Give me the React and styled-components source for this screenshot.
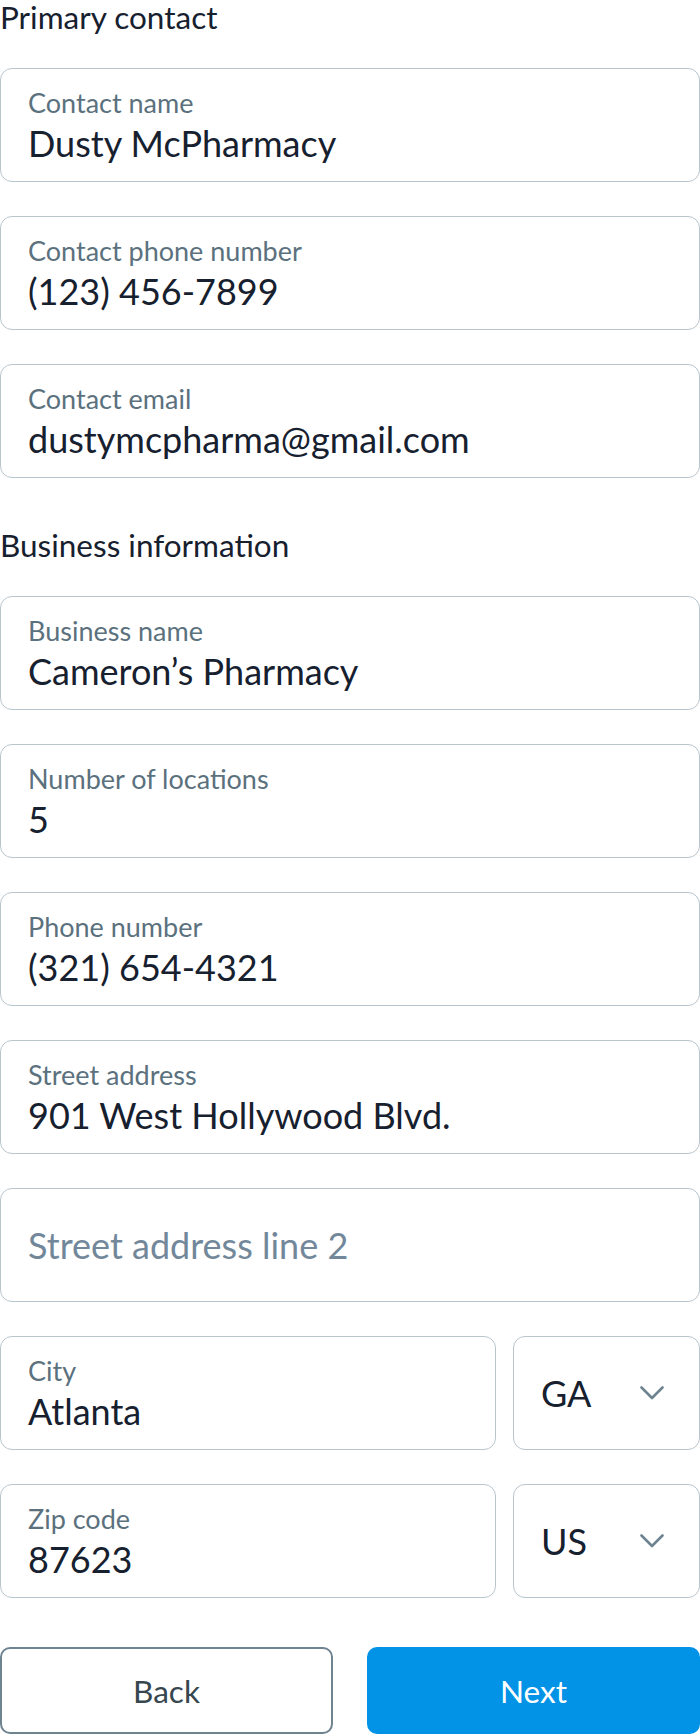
import React from 'react';
import styled, { createGlobalStyle } from 'styled-components';

const GlobalStyle = createGlobalStyle`
  body {
    margin: 0;
    background: #fff;
    font-family: Lato, "Open Sans", sans-serif;
  }
  * { box-sizing: border-box; }
`;

const Page = styled.div`
  width: 700px;
  display: flex;
  flex-direction: column;
`;

const Section = styled.section`
  display: flex;
  flex-direction: column;
  gap: 34px;
  & + & {
    margin-top: 50px;
  }
`;

const Heading = styled.h2`
  margin: 0;
  font-size: 31.5px;
  line-height: 34px;
  font-weight: 400;
  color: #16202e;
`;

const Row = styled.div`
  display: grid;
  grid-template-columns: 1fr 187px;
  gap: 17px;
`;

const Field = styled.div`
  height: 114px;
  border: 1.5px solid #b9c5cd;
  border-radius: 12px;
  padding: 0 27px;
  display: flex;
  flex-direction: column;
  justify-content: center;
  background: #fff;
`;

const Label = styled.span`
  font-size: 27px;
  line-height: 36px;
  color: #5b717e;
`;

const Value = styled.span`
  font-size: 36px;
  line-height: 44px;
  white-space: nowrap;
  color: ${(p) => (p.$placeholder ? '#72889a' : '#16202e')};
`;

const Select = styled(Field)`
  flex-direction: row;
  align-items: center;
  justify-content: space-between;
  padding: 0 35px 0 27px;
`;

const Chevron = () => (
  <svg width="24" height="14" viewBox="0 0 24 14" fill="none">
    <path d="M1.5 1.5 L12 12 L22.5 1.5" stroke="#6e8390" strokeWidth="2.6" strokeLinecap="round" strokeLinejoin="round" />
  </svg>
);

const Actions = styled.div`
  display: grid;
  grid-template-columns: 1fr 1fr;
  gap: 34px;
  margin-top: 49px;
`;

const Button = styled.button`
  height: 87px;
  border-radius: 10px;
  font-family: inherit;
  font-size: 31.5px;
  cursor: pointer;
  border: 2px solid ${(p) => (p.$primary ? '#0293e7' : '#6f8391')};
  background: ${(p) => (p.$primary ? '#0293e7' : '#fff')};
  color: ${(p) => (p.$primary ? '#fff' : '#37474f')};
`;

const TextField = ({ label, value, placeholder }) => (
  <Field>
    {label && <Label>{label}</Label>}
    {value ? <Value>{value}</Value> : <Value $placeholder>{placeholder}</Value>}
  </Field>
);

const SelectField = ({ value }) => (
  <Select>
    <Value>{value}</Value>
    <Chevron />
  </Select>
);

export default function App() {
  return (
    <Page>
      <GlobalStyle />
      <Section>
        <Heading>Primary contact</Heading>
        <TextField label="Contact name" value="Dusty McPharmacy" />
        <TextField label="Contact phone number" value="(123) 456-7899" />
        <TextField label="Contact email" value="dustymcpharma@gmail.com" />
      </Section>
      <Section>
        <Heading>Business information</Heading>
        <TextField label="Business name" value="Cameron’s Pharmacy" />
        <TextField label="Number of locations" value="5" />
        <TextField label="Phone number" value="(321) 654-4321" />
        <TextField label="Street address" value="901 West Hollywood Blvd." />
        <TextField placeholder="Street address line 2" />
        <Row>
          <TextField label="City" value="Atlanta" />
          <SelectField value="GA" />
        </Row>
        <Row>
          <TextField label="Zip code" value="87623" />
          <SelectField value="US" />
        </Row>
      </Section>
      <Actions>
        <Button>Back</Button>
        <Button $primary>Next</Button>
      </Actions>
    </Page>
  );
}
